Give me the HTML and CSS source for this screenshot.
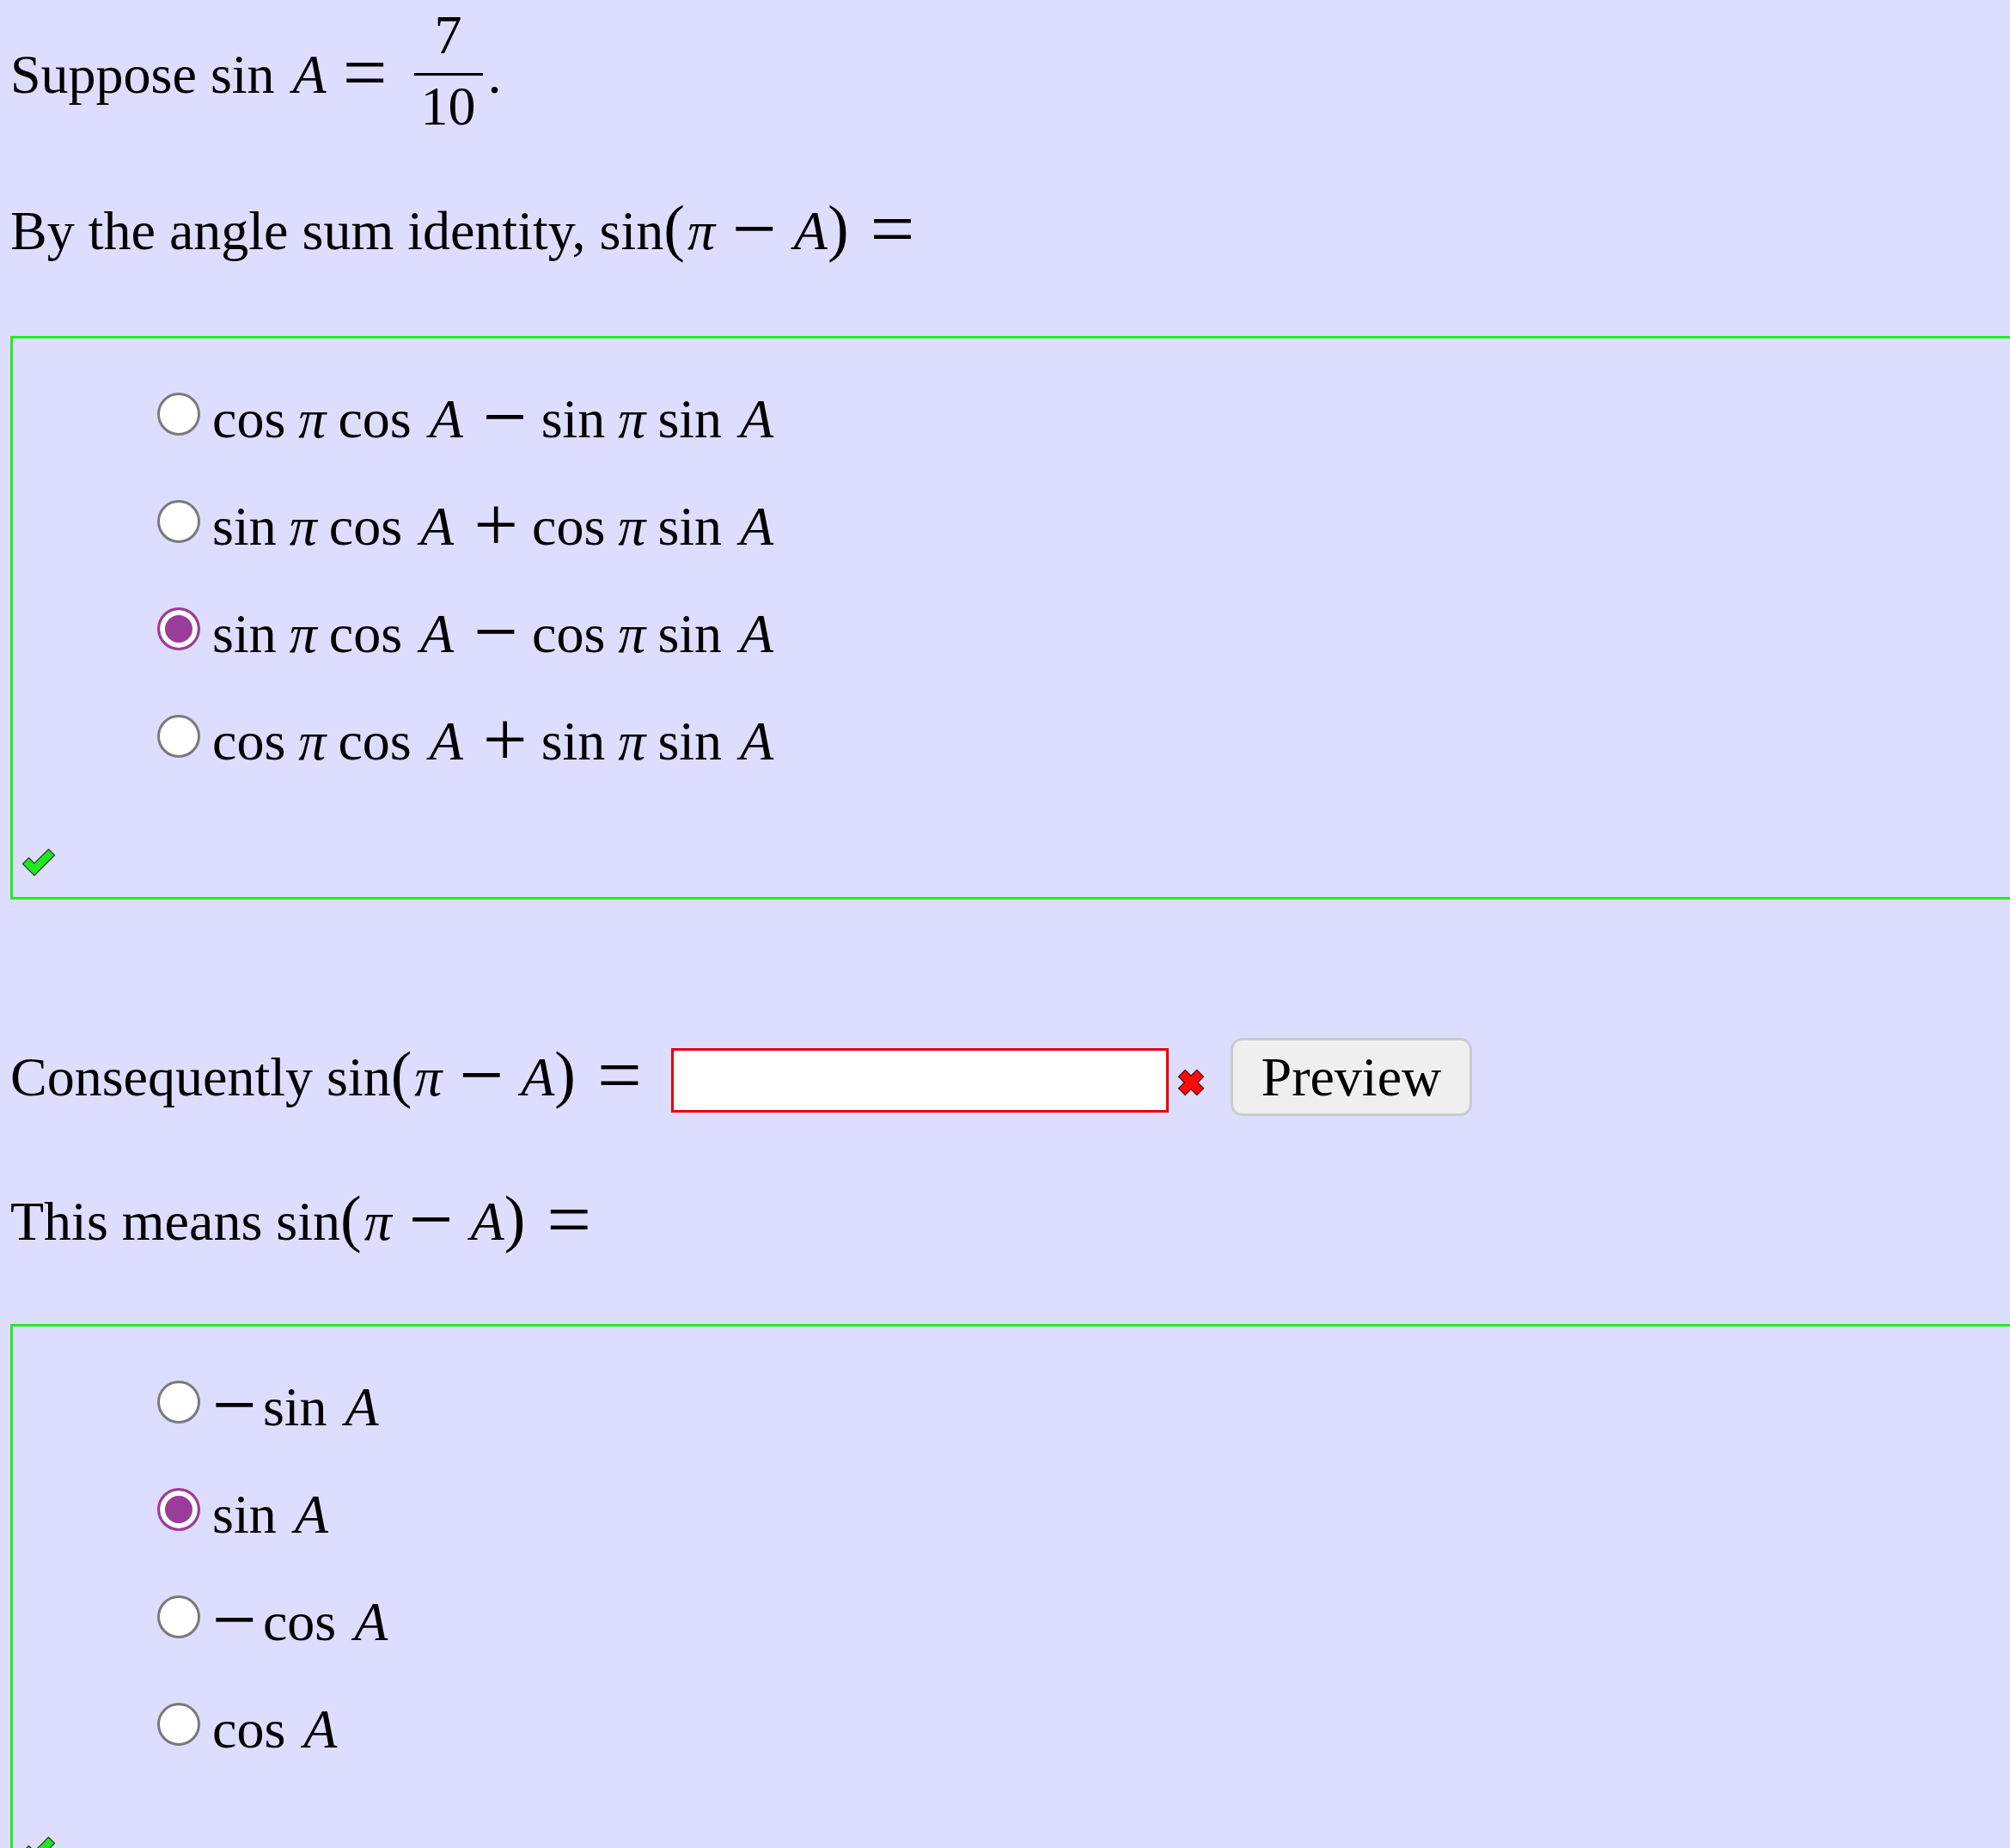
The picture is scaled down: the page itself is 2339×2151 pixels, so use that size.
FILE: index.html
```html
<!DOCTYPE html>
<html>
<head>
<meta charset="utf-8">
<title>Problem</title>
<link rel="stylesheet" href="styles.css">
</head>
<body>
<main class="problem">
  <p class="line line-first">Suppose <span class="math"><span class="fn">sin</span><span class="v after-fn-a">A</span><span class="rel">=</span><span class="frac"><span class="num">7</span><span class="bar"></span><span class="den">10</span></span><span class="dot">.</span></span></p>

  <p class="line line-second">By the angle sum identity, <span class="math"><span class="fn">sin</span><span class="paren">(</span><span class="v pi-in">π</span><span class="bin">−</span><span class="v after-bin-a">A</span><span class="paren paren-close">)</span><span class="rel">=</span></span></p>

  <div class="answer-box">
    <div class="choices">
      <label class="choice"><input type="radio" class="radio" name="q1"><span class="opt"><span class="math"><span class="fn">cos</span><span class="v after-fn">π</span><span class="fn after-v">cos</span><span class="v after-fn-a">A</span><span class="bin">−</span><span class="fn">sin</span><span class="v after-fn">π</span><span class="fn after-v">sin</span><span class="v after-fn-a">A</span></span></span></label>
      <label class="choice"><input type="radio" class="radio" name="q1"><span class="opt"><span class="math"><span class="fn">sin</span><span class="v after-fn">π</span><span class="fn after-v">cos</span><span class="v after-fn-a">A</span><span class="bin">+</span><span class="fn">cos</span><span class="v after-fn">π</span><span class="fn after-v">sin</span><span class="v after-fn-a">A</span></span></span></label>
      <label class="choice"><input type="radio" class="radio" name="q1" checked><span class="opt"><span class="math"><span class="fn">sin</span><span class="v after-fn">π</span><span class="fn after-v">cos</span><span class="v after-fn-a">A</span><span class="bin">−</span><span class="fn">cos</span><span class="v after-fn">π</span><span class="fn after-v">sin</span><span class="v after-fn-a">A</span></span></span></label>
      <label class="choice"><input type="radio" class="radio" name="q1"><span class="opt"><span class="math"><span class="fn">cos</span><span class="v after-fn">π</span><span class="fn after-v">cos</span><span class="v after-fn-a">A</span><span class="bin">+</span><span class="fn">sin</span><span class="v after-fn">π</span><span class="fn after-v">sin</span><span class="v after-fn-a">A</span></span></span></label>
    </div>
    <span class="check" title="Correct"><svg viewBox="0 0 44 40" width="44" height="40"><polygon points="3.46,22.54 17,36.08 40.54,12.54 33.46,5.46 17,21.92 10.54,15.46" fill="#1ee81e" stroke="#2b3a2b" stroke-width="1.2" stroke-linejoin="round"/></svg></span>
  </div>

  <div class="answer-row">
    <span class="row-text">Consequently <span class="math"><span class="fn">sin</span><span class="paren">(</span><span class="v pi-in">π</span><span class="bin">−</span><span class="v after-bin-a">A</span><span class="paren paren-close">)</span><span class="rel">=</span></span></span>
    <input type="text" class="answer-input" aria-label="answer">
    <span class="xmark" title="Incorrect"><svg viewBox="0 0 20 20" width="34" height="34"><polygon points="1.5,6 6,1.5 10,5.5 14,1.5 18.5,6 14.5,10 18.5,14 14,18.5 10,14.5 6,18.5 1.5,14 5.5,10" fill="#ff0a0a" stroke="#5a1010" stroke-width="0.8" stroke-linejoin="round"/></svg></span>
    <button type="button" class="preview-btn">Preview</button>
  </div>

  <p class="line line-means">This means <span class="math"><span class="fn">sin</span><span class="paren">(</span><span class="v pi-in">π</span><span class="bin">−</span><span class="v after-bin-a">A</span><span class="paren paren-close">)</span><span class="rel">=</span></span></p>

  <div class="answer-box answer-box-second">
    <div class="choices">
      <label class="choice"><input type="radio" class="radio" name="q2"><span class="opt"><span class="math"><span class="neg">−</span><span class="fn">sin</span><span class="v after-fn-a">A</span></span></span></label>
      <label class="choice"><input type="radio" class="radio" name="q2" checked><span class="opt"><span class="math"><span class="fn">sin</span><span class="v after-fn-a">A</span></span></span></label>
      <label class="choice"><input type="radio" class="radio" name="q2"><span class="opt"><span class="math"><span class="neg">−</span><span class="fn">cos</span><span class="v after-fn-a">A</span></span></span></label>
      <label class="choice"><input type="radio" class="radio" name="q2"><span class="opt"><span class="math"><span class="fn">cos</span><span class="v after-fn-a">A</span></span></span></label>
    </div>
    <span class="check" title="Correct"><svg viewBox="0 0 44 40" width="44" height="40"><polygon points="3.46,22.54 17,36.08 40.54,12.54 33.46,5.46 17,21.92 10.54,15.46" fill="#1ee81e" stroke="#2b3a2b" stroke-width="1.2" stroke-linejoin="round"/></svg></span>
  </div>
</main>
</body>
</html>
```

FILE: styles.css
```css
html, body {
  margin: 0;
  padding: 0;
  overflow: hidden;
  background: #ddddff;
}

body {
  font-family: "Liberation Serif", "Times New Roman", serif;
  font-size: 64px;
  color: #000;
}

.problem {
  padding: 9px 0 0 12px;
  width: 2600px;
}

.line {
  margin: 0;
  line-height: 80px;
  white-space: nowrap;
}

.line-second {
  margin-top: 73px;
}

.line-means {
  margin-top: 83px;
}

/* ---------- math ---------- */
.math {
  line-height: 0;
  white-space: nowrap;
}

.fn {
  font-style: normal;
}

.v {
  font-style: italic;
}

.after-fn {
  margin-left: 15px;
}

.after-fn-a {
  margin-left: 21px;
  padding-right: 3px;
}

.after-v {
  margin-left: 14px;
}

.pi-in {
  margin-left: 3px;
}

.after-bin-a {
  margin-left: 4px;
}

.rel {
  font-size: 92px;
  margin: 0 15px 0 16px;
  vertical-align: -7px;
}

.bin {
  font-size: 92px;
  margin: 0 16px 0 20px;
  vertical-align: -7px;
}

.neg {
  font-size: 92px;
  margin-right: 7px;
  vertical-align: -7px;
}

.paren {
  font-size: 74px;
  font-weight: 300;
}

.paren-close {
  margin-right: 9px;
}

.frac {
  display: inline-flex;
  flex-direction: column;
  align-items: center;
  vertical-align: 46px;
  margin-left: 16px;
}

.num,
.den {
  line-height: 64px;
}

.den {
  padding: 0 8px;
}

.bar {
  align-self: stretch;
  height: 3px;
  background: #000;
  margin: 12px 0 4px;
}

.dot {
  margin-left: 6px;
}

/* ---------- answer boxes ---------- */
.answer-box {
  margin-top: 82px;
  border: 3px solid #20ee20;
  width: 2600px;
  box-sizing: border-box;
  padding: 31px 0 21px 0;
}

.answer-box-second {
  margin-top: 79px;
}

.choices {
  padding-left: 168px;
}

.choice {
  display: flex;
  align-items: center;
  height: 125px;
}

.opt {
  line-height: 80px;
  white-space: nowrap;
}

.radio {
  appearance: none;
  -webkit-appearance: none;
  flex: none;
  width: 50px;
  height: 50px;
  margin: 0 14px 12px 0;
  box-sizing: border-box;
  border: 3px solid #7a7a7a;
  border-radius: 50%;
  background: #fff;
}

.radio:checked {
  border-color: #9a3c9a;
  background: #9a3c9a;
  box-shadow: inset 0 0 0 6px #fff;
}

.check {
  display: block;
  width: 44px;
  height: 40px;
  margin: 58px 0 0 8px;
}

.check svg,
.xmark svg {
  display: block;
}

/* ---------- answer row ---------- */
.answer-row {
  display: flex;
  align-items: center;
  margin-top: 161px;
  height: 91px;
}

.row-text {
  line-height: 80px;
  white-space: nowrap;
}

.answer-input {
  flex: none;
  width: 579px;
  height: 75px;
  box-sizing: border-box;
  margin: 8px 0 0 19px;
  border: 3px solid #e8000b;
  background: #fff;
  padding: 0 10px;
  font: inherit;
  outline: none;
}

.xmark {
  flex: none;
  margin: 13px 0 0 9px;
}

.preview-btn {
  flex: none;
  width: 281px;
  height: 91px;
  margin-left: 29px;
  box-sizing: border-box;
  border: 3px solid #cbcbcb;
  border-radius: 14px;
  background: #efefef;
  color: #000;
  font-family: "Liberation Serif", "Times New Roman", serif;
  font-size: 64px;
  padding: 0;
  line-height: 1;
}
```
